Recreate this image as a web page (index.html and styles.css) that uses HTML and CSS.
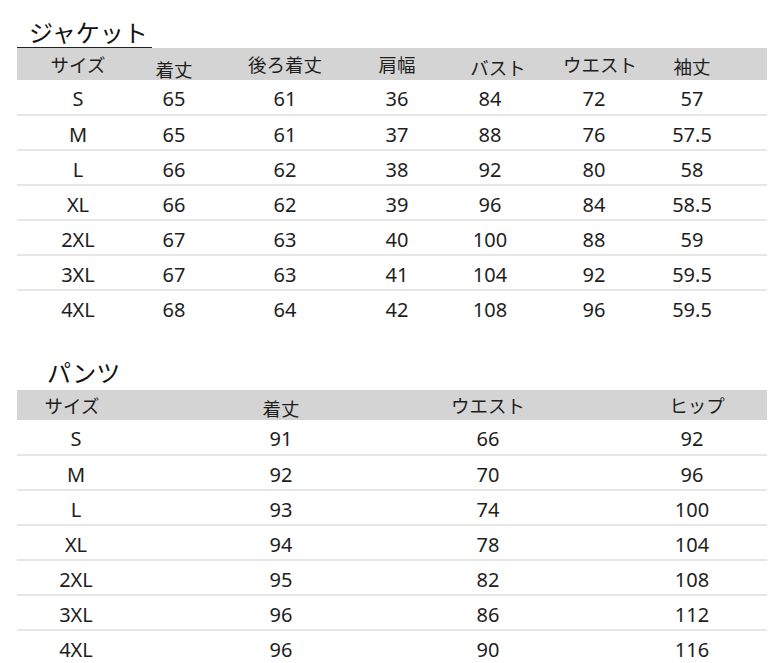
FILE: index.html
```html
<!DOCTYPE html>
<html lang="ja">
<head>
<meta charset="utf-8">
<link rel="stylesheet" href="styles.css">
</head>
<body>
<div class="page">
  <section class="block jacket">
    <h2 class="title title-underline">ジャケット</h2>
    <table class="size-table">
      <colgroup>
        <col style="width:122px"><col style="width:70px"><col style="width:152px"><col style="width:72px"><col style="width:114px"><col style="width:94px"><col style="width:102px"><col>
      </colgroup>
      <thead>
        <tr>
          <th>サイズ</th>
          <th class="low5">着丈</th>
          <th>後ろ着丈</th>
          <th>肩幅</th>
          <th class="low3 shift8">バスト</th>
          <th class="shift6">ウエスト</th>
          <th class="low2">袖丈</th>
          <th></th>
        </tr>
      </thead>
      <tbody>
        <tr><td>S</td><td>65</td><td>61</td><td>36</td><td>84</td><td>72</td><td>57</td><td></td></tr>
        <tr><td>M</td><td>65</td><td>61</td><td>37</td><td>88</td><td>76</td><td>57.5</td><td></td></tr>
        <tr><td>L</td><td>66</td><td>62</td><td>38</td><td>92</td><td>80</td><td>58</td><td></td></tr>
        <tr><td>XL</td><td>66</td><td>62</td><td>39</td><td>96</td><td>84</td><td>58.5</td><td></td></tr>
        <tr><td>2XL</td><td>67</td><td>63</td><td>40</td><td>100</td><td>88</td><td>59</td><td></td></tr>
        <tr><td>3XL</td><td>67</td><td>63</td><td>41</td><td>104</td><td>92</td><td>59.5</td><td></td></tr>
        <tr><td>4XL</td><td>68</td><td>64</td><td>42</td><td>108</td><td>96</td><td>59.5</td><td></td></tr>
      </tbody>
    </table>
  </section>

  <section class="block pants">
    <h2 class="title title-plain">パンツ</h2>
    <table class="size-table pants-table">
      <colgroup>
        <col style="width:118px"><col style="width:292px"><col style="width:122px"><col>
      </colgroup>
      <thead>
        <tr>
          <th class="shiftl8">サイズ</th>
          <th class="low3 shiftl8">着丈</th>
          <th>ウエスト</th>
          <th class="pad-hip">ヒップ</th>
        </tr>
      </thead>
      <tbody>
        <tr><td>S</td><td>91</td><td>66</td><td class="pad-hip">92</td></tr>
        <tr><td>M</td><td>92</td><td>70</td><td class="pad-hip">96</td></tr>
        <tr><td>L</td><td>93</td><td>74</td><td class="pad-hip">100</td></tr>
        <tr><td>XL</td><td>94</td><td>78</td><td class="pad-hip">104</td></tr>
        <tr><td>2XL</td><td>95</td><td>82</td><td class="pad-hip">108</td></tr>
        <tr><td>3XL</td><td>96</td><td>86</td><td class="pad-hip">112</td></tr>
        <tr><td>4XL</td><td>96</td><td>90</td><td class="pad-hip">116</td></tr>
      </tbody>
    </table>
  </section>
</div>
</body>
</html>
```

FILE: styles.css
```css
* { box-sizing: border-box; }

html, body {
  margin: 0;
  padding: 0;
  background: #ffffff;
}

body {
  font-family: "Noto Sans", "Noto Sans CJK JP", sans-serif;
  color: #1e1e1e;
}

.page {
  width: 780px;
  height: 663px;
  padding: 0 13px 0 17px;
  overflow: hidden;
}

.block {
  display: flex;
  flex-direction: column;
  align-items: flex-start;
}

.title {
  margin: 0;
  font-family: "Noto Sans CJK JP", sans-serif;
  font-weight: 400;
  font-size: 24px;
  line-height: 28px;
  color: #111;
}

.title-underline {
  margin-top: 18px;
  padding: 0 4px 0 12px;
  border-bottom: 1.5px solid #222;
  height: 30px;
}

.title-plain {
  margin-top: 33px;
  padding-left: 30px;
  height: 32px;
}

.size-table {
  width: 750px;
  border-collapse: collapse;
  table-layout: fixed;
}

.size-table th {
  height: 32px;
  padding: 0;
  background: #d4d4d4;
  font-family: "Noto Sans CJK JP", sans-serif;
  font-weight: 400;
  font-size: 18.5px;
  line-height: 20px;
  text-align: center;
  vertical-align: middle;
}

.pants-table th {
  height: 30px;
}

.size-table td {
  height: 35px;
  padding: 4px 0 0 0;
  font-size: 20px;
  line-height: 24px;
  text-align: center;
  vertical-align: middle;
  border-top: 2px solid #e6e6e6;
}

.size-table tbody tr:first-child td {
  border-top: none;
}

.low5 { padding-top: 10px !important; }
.low3 { padding-top: 6px !important; }
.low2 { padding-top: 4px !important; }
.shift8 { padding-left: 16px !important; }
.shift6 { padding-left: 12px !important; }
.shiftl8 { padding-right: 8px !important; }
.pants-table th.shiftl8.low3 { padding-right: 0 !important; padding-left: 0 !important; }

.pad-hip { padding-left: 68px !important; }
.pants-table th.pad-hip { padding-left: 78px !important; }
```
